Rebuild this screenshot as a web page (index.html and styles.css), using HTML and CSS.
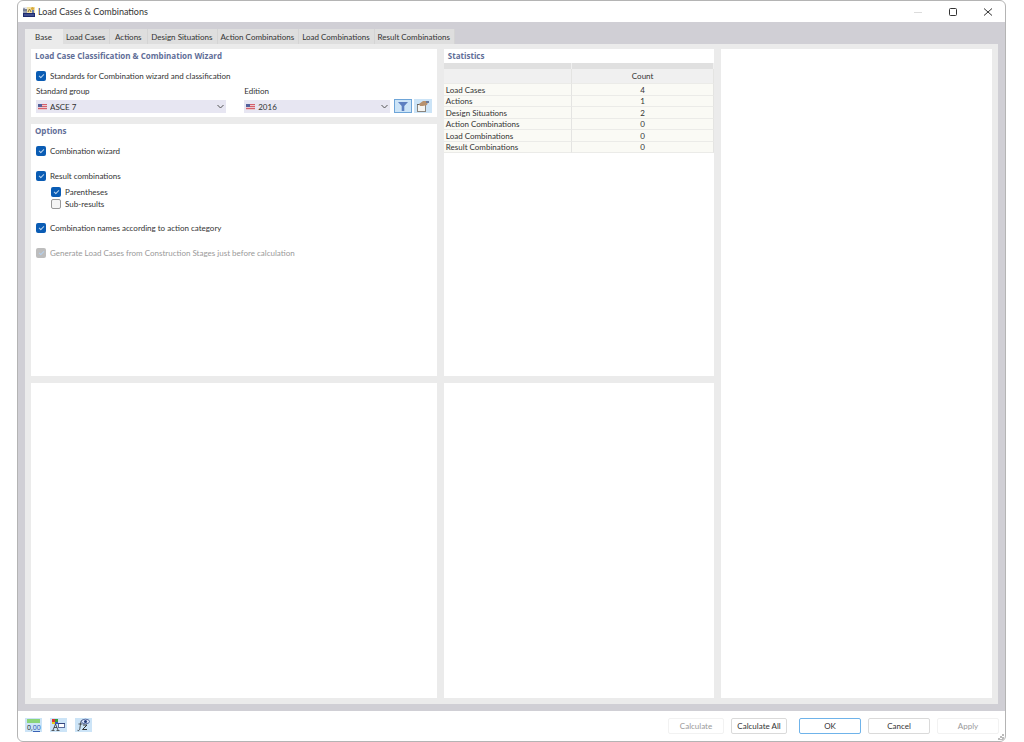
FILE: index.html
```
<!DOCTYPE html>
<html lang="en">
<head>
    <meta charset="UTF-8">
    <meta name="viewport" content="width=device-width, initial-scale=1.0">
    <title>Load Cases &amp; Combinations</title>
    <link rel="stylesheet" href="styles.css">
</head>
<body>
    <div class="window">
        <!-- Title bar -->
        <header class="title-bar">
            <svg class="app-icon" viewBox="0 0 12 12">
                <path d="M0 1h4v6H0z" fill="#e4e6ec"/>
                <path d="M1 7V2M3 7V3M0 4h4" stroke="#4f5b78"/>
                <rect x="4" y="1" width="8" height="6" fill="#f3e2a6"/>
                <path d="M5 6l1.500-3L8 6" fill="none" stroke="#8a6f35"/>
                <circle cx="9.500" cy="2.500" r="1.500" fill="#d8a93c"/>
                <path d="M9 7V4h2v3z" fill="#6f84ad"/>
                <rect x="0" y="7" width="12" height="4" fill="#1d2a6e"/>
                <path d="M1 9h10" stroke="#6573b0"/>
            </svg>
            <h1>Load Cases &amp; Combinations</h1>
            <div class="window-controls">
                <button class="window-btn" aria-label="Minimize" disabled>
                    <svg viewBox="0 0 10 10"><path d="M1 5.500h8" stroke="#dcdcdc"/></svg>
                </button>
                <button class="window-btn" aria-label="Maximize">
                    <svg viewBox="0 0 10 10"><rect x="1.500" y="1.500" width="7" height="7" rx="1" fill="none" stroke="#333"/></svg>
                </button>
                <button class="window-btn" aria-label="Close">
                    <svg viewBox="0 0 10 10"><path d="M1 1.500l8 7M9 1.500L1 8.500" stroke="#333"/></svg>
                </button>
            </div>
        </header>

        <!-- Tabs and panels -->
        <main class="content">
            <nav class="tabs" role="tablist">
                <button class="tab active" role="tab">Base</button>
                <button class="tab" role="tab">Load Cases</button>
                <button class="tab" role="tab">Actions</button>
                <button class="tab" role="tab">Design Situations</button>
                <button class="tab" role="tab">Action Combinations</button>
                <button class="tab" role="tab">Load Combinations</button>
                <button class="tab" role="tab">Result Combinations</button>
            </nav>

            <div class="tab-page">
                <div class="column">
                    <div class="top">
                        <section class="card standards">
                            <h2>Load Case Classification &amp; Combination Wizard</h2>
                            <label class="check"><input type="checkbox" checked>Standards for Combination wizard and classification</label>
                            <div class="fields">
                                <div class="field group">
                                    <label for="standard-group">Standard group</label>
                                    <div class="select-box">
                                        <svg class="flag" viewBox="0 0 9 6"><path fill="#e9c9cf" d="M0 0h9v6H0z"/><path stroke="#d5606c" d="M0 .5h9M0 2.500h9M0 4.500h9"/><path fill="#53619c" d="M0 0h4v3H0z"/></svg>
                                        <select id="standard-group"><option>ASCE 7</option></select>
                                        <svg class="chevron" viewBox="0 0 7 5"><path d="M.5 1l3 3 3-3" fill="none" stroke="#555"/></svg>
                                    </div>
                                </div>
                                <div class="field edition">
                                    <label for="edition">Edition</label>
                                    <div class="select-box">
                                        <svg class="flag" viewBox="0 0 9 6"><path fill="#e9c9cf" d="M0 0h9v6H0z"/><path stroke="#d5606c" d="M0 .5h9M0 2.500h9M0 4.500h9"/><path fill="#53619c" d="M0 0h4v3H0z"/></svg>
                                        <select id="edition"><option>2016</option></select>
                                        <svg class="chevron" viewBox="0 0 7 5"><path d="M.5 1l3 3 3-3" fill="none" stroke="#555"/></svg>
                                    </div>
                                </div>
                                <div class="field-buttons">
                                    <button class="icon-btn pressed" aria-label="Filter">
                                        <svg viewBox="0 0 16 12"><path d="M3 2h10L9.300 6v5H6.700V6z" fill="#5d7fc0"/></svg>
                                    </button>
                                    <button class="icon-btn" aria-label="Standard settings">
                                        <svg viewBox="0 0 16 12">
                                            <rect x="2.500" y="4.500" width="8" height="7" fill="#f5f5f2" stroke="#8a857e"/>
                                            <path d="M2 4.500h9" stroke="#666"/>
                                            <path d="M4 4l4-3 3 0 1 1 1 0-1 3-4 1-3 0z" fill="#b8926e"/>
                                            <path d="M11 1h3v2h-3z" fill="#6c7c9c"/>
                                        </svg>
                                    </button>
                                </div>
                            </div>
                        </section>

                        <section class="card options">
                            <h2>Options</h2>
                            <label class="check"><input type="checkbox" checked>Combination wizard</label>
                            <div class="check-group">
                                <label class="check"><input type="checkbox" checked>Result combinations</label>
                                <div class="sub-checks">
                                    <label class="check"><input type="checkbox" checked>Parentheses</label>
                                    <label class="check"><input type="checkbox">Sub-results</label>
                                </div>
                            </div>
                            <label class="check"><input type="checkbox" checked>Combination names according to action category</label>
                            <label class="check disabled"><input type="checkbox" checked disabled>Generate Load Cases from Construction Stages just before calculation</label>
                        </section>
                    </div>
                    <section class="card bottom"></section>
                </div>

                <div class="column">
                    <section class="card top">
                        <h2>Statistics</h2>
                        <table class="stats">
                            <thead>
                                <tr class="strip"><td></td><td></td></tr>
                                <tr><th></th><th scope="col">Count</th></tr>
                            </thead>
                            <tbody>
                                <tr><td>Load Cases</td><td>4</td></tr>
                                <tr><td>Actions</td><td>1</td></tr>
                                <tr><td>Design Situations</td><td>2</td></tr>
                                <tr><td>Action Combinations</td><td>0</td></tr>
                                <tr><td>Load Combinations</td><td>0</td></tr>
                                <tr><td>Result Combinations</td><td>0</td></tr>
                            </tbody>
                        </table>
                    </section>
                    <section class="card bottom"></section>
                </div>

                <section class="card"></section>
            </div>
        </main>

        <!-- Footer -->
        <footer class="footer">
            <div class="tools">
                <button class="tool-btn" aria-label="Units and decimal places">
                    <svg viewBox="0 0 17 14">
                        <rect x="2" y="1" width="13" height="4" fill="#8bd47b"/>
                        <text x="2" y="12" class="tool-text">0,<tspan class="decimals">00</tspan></text>
                        <path d="M8 13.500h7" stroke="#3a62b5"/>
                    </svg>
                </button>
                <button class="tool-btn" aria-label="Display properties">
                    <svg viewBox="0 0 17 14">
                        <rect x="2" y="1" width="3" height="3" fill="#d33"/>
                        <rect x="5" y="1" width="3" height="3" fill="#3a9c3a"/>
                        <rect x="2" y="4" width="3" height="2" fill="#e8c81c"/>
                        <rect x="5" y="4" width="3" height="2" fill="#3556c8"/>
                        <path d="M3 12l2.500-6L8 12M4 9.500h3M1.500 12.500h3M6.500 12.500h3" fill="none" stroke="#333" stroke-width=".8"/>
                        <rect x="8.500" y="5.500" width="6" height="4" fill="#fff" stroke="#5b6b9c"/>
                        <path d="M8 5.500h7" stroke="#35477f"/>
                    </svg>
                </button>
                <button class="tool-btn" aria-label="Formulas">
                    <svg viewBox="0 0 17 14">
                        <path d="M8 2.500C6.500 1.500 6 3 5.700 5L4.800 10.500C4.500 12.500 3.500 13 2.500 12.300M3.500 6h4" fill="none" stroke="#333" stroke-width=".8"/>
                        <path d="M8 7h4l-4.500 4.500H12" fill="none" stroke="#333"/>
                        <ellipse cx="10.500" cy="3.500" rx="4" ry="2.300" fill="#dfe8fb" stroke="#3c5390" stroke-width=".8"/>
                        <circle cx="10.500" cy="3.500" r="1.500" fill="#253c78"/>
                    </svg>
                </button>
            </div>
            <div class="actions">
                <button class="btn small" disabled>Calculate</button>
                <button class="btn small">Calculate All</button>
                <button class="btn primary">OK</button>
                <button class="btn">Cancel</button>
                <button class="btn" disabled>Apply</button>
            </div>
            <svg class="grip" viewBox="0 0 6 6"><path d="M4 0h2v2H4zM2 2h2v2H2zM4 3h2v3H4zM0 4h2v2H0zM2 5h2v1H2z" fill="#bbb"/></svg>
        </footer>
    </div>
</body>
</html>
```
FILE: styles.css
```
* {
    box-sizing: border-box;
}

body {
    margin: 0;
    padding: 0 18px 0 17px;
    background-color: white;
    color: #333;
    font-family: Lato, sans-serif;
    font-size: 8px;
    line-height: 12px;
}

button, select {
    font: inherit;
    color: inherit;
    margin: 0;
    padding: 0;
    border: none;
}

svg {
    display: block;
}

.window {
    display: flex;
    flex-direction: column;
    height: 100vh;
    border: 1px solid #b4b4b4;
    border-radius: 6px;
    overflow: hidden;
    position: relative;
}

/* Title bar */
.title-bar {
    display: flex;
    align-items: center;
    height: 21px;
    padding-left: 5px;
}

.app-icon {
    width: 12px;
    height: 12px;
}

h1 {
    flex: 1;
    margin: 0 0 0 3px;
    font-size: 9px;
    font-weight: normal;
}

.window-controls {
    display: flex;
}

.window-btn {
    display: flex;
    justify-content: center;
    width: 35px;
    background: none;
}

.window-btn svg {
    width: 10px;
    height: 10px;
}

/* Content */
.content {
    flex: 1;
    display: flex;
    flex-direction: column;
    padding: 7px;
    background: #d0cfd5;
}

.tabs {
    display: flex;
}

.tab {
    min-width: 38px;
    height: 15px;
    padding: 0 4px 0 3px;
    background: #dedede;
    border-right: 1px solid #d4d4d4;
}

.tab.active {
    background: #ebebeb;
    border-right: none;
}

.tab-page {
    flex: 1;
    display: grid;
    grid-template-columns: 3fr 2fr 2fr;
    gap: 7px;
    padding: 5px 6px 6px;
    background: #ebebeb;
}

.column, .top {
    display: flex;
    flex-direction: column;
}

.column, .column > div.top {
    gap: 7px;
}

.top {
    flex: 51 1 0;
}

.bottom {
    flex: 49 1 0;
}

.card {
    background: white;
}

h2 {
    margin: 0;
    padding: 0 4px;
    color: #5f6e98;
    font-family: "Open Sans", sans-serif;
    font-size: 8px;
    font-weight: bold;
    line-height: 14px;
}

/* Check boxes */
.check {
    display: flex;
    align-items: center;
    gap: 4px;
}

.check input {
    appearance: none;
    position: relative;
    width: 10px;
    height: 10px;
    margin: 0;
    background: #0a5cb4;
    border-radius: 2px;
}

.check input:checked::after {
    content: "";
    position: absolute;
    left: 3px;
    top: 3px;
    width: 4px;
    height: 2px;
    border-left: 1px solid #b5d0ec;
    border-bottom: 1px solid #b5d0ec;
    transform: rotate(-45deg);
}

.check input:not(:checked) {
    background: #f5f5f5;
    border: 1px solid #999;
}

.check input:disabled {
    background: #bdbdbd;
}

.disabled {
    color: #999;
}

.standards {
    padding-bottom: 4px;
}

.standards .check {
    padding: 7px 5px 3px;
}

.options {
    flex: 1;
}

.options > .check, .check-group {
    margin: 7px 5px 13px;
}

.options > .check + .check {
    margin-top: 0;
}

.check-group {
    margin: 0 5px 12px;
}

.sub-checks {
    padding: 4px 0 0 15px;
}

/* Drop-downs */
.fields {
    display: flex;
    align-items: flex-end;
    padding: 0 5px;
}

.group {
    flex: 192;
    margin-right: 18px;
}

.edition {
    flex: 147;
}

.field label {
    display: block;
    padding-bottom: 3px;
}

.select-box {
    position: relative;
}

select {
    display: block;
    appearance: none;
    width: 100%;
    height: 13px;
    padding-left: 14px;
    background: #e7e6f2;
}

.flag, .chevron {
    position: absolute;
    pointer-events: none;
}

.flag {
    top: 4px;
    left: 2px;
    width: 9px;
    height: 6px;
}

.chevron {
    top: 4px;
    right: 2px;
    width: 7px;
    height: 5px;
}

.field-buttons {
    display: flex;
    gap: 2px;
    padding-left: 4px;
}

.icon-btn {
    width: 18px;
    height: 14px;
    background: #cce4f7;
    border: 1px solid #cce4f7;
}

.icon-btn.pressed {
    border-color: #6ea5d8;
}

/* Statistics */
.stats {
    width: 100%;
    border-collapse: separate;
    border-spacing: 0;
    table-layout: fixed;
    line-height: 10px;
}

.stats td, .stats th {
    height: 12px;
    padding: 0 2px;
    background: #fafaf5;
    border-bottom: 1px solid #ebebe8;
    border-right: 1px solid #e4e4e2;
    font-weight: normal;
}

.stats td:first-child, .stats th:first-child {
    width: 128px;
}

.stats td:last-child {
    text-align: center;
}

.stats tr:nth-child(even) td {
    height: 11px;
}

.stats th {
    height: 15px;
    background: #f0f0f0;
}

.stats .strip td {
    height: 6px;
    background: #e0e0e0;
    border-bottom: none;
    border-right-color: #f0f0f0;
}

/* Footer */
.footer {
    display: flex;
    justify-content: space-between;
    height: 30px;
    padding: 7px 6px 0 7px;
}

.tools {
    display: flex;
    gap: 8px;
}

.tool-btn {
    width: 17px;
    height: 14px;
    background: #cce4f7;
}

.tool-text {
    font-family: "Open Sans", sans-serif;
    font-size: 7px;
    fill: #222;
}

.decimals {
    fill: #2b57b5;
}

.actions {
    display: flex;
    gap: 7px;
}

.btn {
    width: 62px;
    height: 16px;
    background: white;
    border: 1px solid #dadada;
    border-radius: 2px;
}

.btn.small {
    width: 56px;
}

.btn.primary {
    margin-left: 5px;
    border-color: #6fb3ea;
}

.btn:disabled {
    color: #999;
    border-color: #f2f2f2;
}

.grip {
    position: absolute;
    right: 1px;
    bottom: 1px;
    width: 6px;
    height: 6px;
}
```
